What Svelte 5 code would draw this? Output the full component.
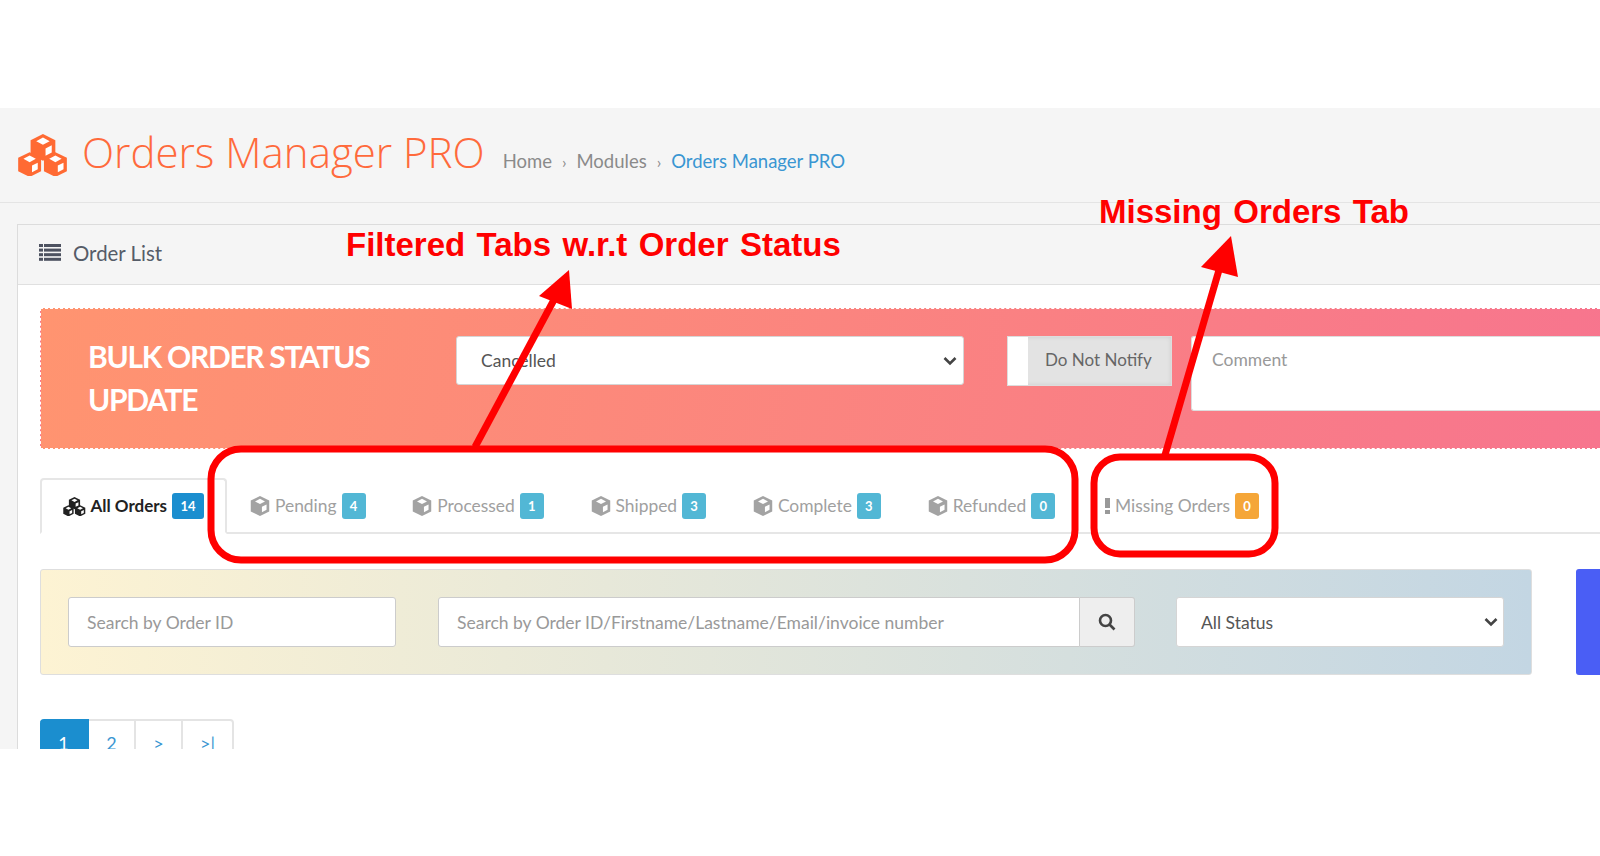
<script>
	const tabs = [
		{ label: "All Orders", count: 14, icon: "cubes", tone: "blue", active: true },
		{ label: "Pending", count: 4, icon: "cube", tone: "info" },
		{ label: "Processed", count: 1, icon: "cube", tone: "info" },
		{ label: "Shipped", count: 3, icon: "cube", tone: "info" },
		{ label: "Complete", count: 3, icon: "cube", tone: "info" },
		{ label: "Refunded", count: 0, icon: "cube", tone: "info" },
		{ label: "Missing Orders", count: 0, icon: "warn", tone: "warning" }
	];
	const pages = ["1", "2", ">", ">|"];
	const cubePts = "12,0 24,6 24,20 12,26 0,20 0,6";
</script>

{#snippet cube(x, y, s, fill)}
	<g transform="translate({x} {y}) scale({s})">
		<polygon points={cubePts} fill={fill} />
		<polygon points="12,3.5 18.5,7 12,10.5 5.5,7" fill="#fff" />
		<polygon points="14.5,14 20.5,11 20.5,18 14.5,21" fill="#fff" />
	</g>
{/snippet}

{#snippet chevron()}
	<svg class="chev" width="14" height="10" viewBox="0 0 14 10">
		<path d="M1.5 2 L7 7.5 L12.5 2" fill="none" stroke="#444" stroke-width="2.6" />
	</svg>
{/snippet}

<div class="page">
	<div class="shell">
		<header class="top">
			<svg class="logo" width="52" height="42" viewBox="0 0 52 44">
				{@render cube(13, 0, 1.08, "#ff6a33")}
				{@render cube(0, 19, 1.0, "#ff6a33")}
				{@render cube(27, 19, 1.0, "#ff6a33")}
			</svg>
			<h1>Orders Manager PRO</h1>
			<nav class="crumbs">
				<span>Home</span><i>›</i><span>Modules</span><i>›</i><a href="#top">Orders Manager PRO</a>
			</nav>
		</header>

		<section class="panel">
			<div class="panel-head">
				<svg width="22" height="17" viewBox="0 0 22 17" fill="#4d5260">
					<rect x="0" y="0" width="4" height="3" /><rect x="5" y="0" width="17" height="3" />
					<rect x="0" y="4.6" width="4" height="3" /><rect x="5" y="4.6" width="17" height="3" />
					<rect x="0" y="9.2" width="4" height="3" /><rect x="5" y="9.2" width="17" height="3" />
					<rect x="0" y="13.8" width="4" height="3" /><rect x="5" y="13.8" width="17" height="3" />
				</svg>
				<span>Order List</span>
			</div>

			<div class="panel-body">
				<div class="banner">
					<h2>BULK ORDER STATUS UPDATE</h2>
					<div class="select status">
						<select><option>Cancelled</option></select>
						{@render chevron()}
					</div>
					<div class="notify"><b></b><span>Do Not Notify</span></div>
					<textarea placeholder="Comment"></textarea>
				</div>

				<div class="tabs">
					{#each tabs as tab}
						<div class="tab" class:active={tab.active} class:missing={tab.icon === "warn"}>
							{#if tab.icon === "cubes"}
								<svg width="23" height="19" viewBox="0 0 52 44">
									{@render cube(13, 0, 1.08, "#222")}
									{@render cube(0, 19, 1.0, "#222")}
									{@render cube(27, 19, 1.0, "#222")}
								</svg>
							{:else if tab.icon === "cube"}
								<svg width="20" height="20" viewBox="0 0 24 26">
									{@render cube(0, 0, 1, "#a3a3a3")}
								</svg>
							{:else}
								<svg class="warn" width="5" height="16" viewBox="0 0 5 16" fill="#999">
									<rect x="0" y="0" width="5" height="10" /><rect x="0" y="12" width="5" height="4" />
								</svg>
							{/if}
							<span class="label">{tab.label}</span>
							<span class="badge {tab.tone}">{tab.count}</span>
						</div>
					{/each}
				</div>

				<div class="filters-row">
					<div class="filters">
						<input class="order-id" placeholder="Search by Order ID" />
						<div class="search">
							<input placeholder="Search by Order ID/Firstname/Lastname/Email/invoice number" />
							<button aria-label="Search">
								<svg width="18" height="18" viewBox="0 0 18 18" fill="none" stroke="#444" stroke-width="2.6">
									<circle cx="7.5" cy="7.5" r="5.5" /><path d="M11.5 11.5 L16.5 16.5" />
								</svg>
							</button>
						</div>
						<div class="select all">
							<select><option>All Status</option></select>
							{@render chevron()}
						</div>
					</div>
					<div class="blue-btn"></div>
				</div>

				<div class="pager">
					{#each pages as p, i}
						<span class:on={i === 0}>{p}</span>
					{/each}
				</div>
			</div>
		</section>
	</div>

	<svg class="notes" width="1600" height="856" viewBox="0 0 1600 856">
		<text x="346" y="256" class="note">Filtered Tabs w.r.t Order Status</text>
		<text x="1099" y="223" class="note">Missing Orders Tab</text>
		<g fill="none" stroke="#f00" stroke-width="7">
			<rect x="211" y="449" width="864" height="111" rx="30" />
			<rect x="1094" y="457" width="181" height="97" rx="26" />
			<path d="M475 447 L556 296" />
			<path d="M1165 455 L1219 270" />
		</g>
		<polygon points="569,270 539,296 572,309" fill="#f00" />
		<polygon points="1231,236 1201,267 1238,277" fill="#f00" />
	</svg>
</div>

<style>
	:global(body) {
		margin: 0;
		background: #fff;
	}

	.page {
		position: relative;
		height: 856px;
		overflow: hidden;
		padding-top: 108px;
		box-sizing: border-box;
		font-family: Lato, "Liberation Sans", sans-serif;
	}

	.shell {
		height: 641px;
		overflow: hidden;
		background: #f5f5f5;
	}

	.top {
		height: 94px;
		border-bottom: 1px solid #e4e4e4;
		display: flex;
		align-items: center;
		padding-left: 17px;
	}

	.logo {
		flex: none;
		margin-top: -1px;
	}

	h1 {
		margin: -8px 0 0 13px;
		font: 300 42px "Open Sans", sans-serif;
		color: #ff6a3c;
		white-space: nowrap;
	}

	.crumbs {
		margin: 12px 0 0 18px;
		font-size: 18.5px;
		color: #8a8a8a;
		display: flex;
		align-items: center;
	}

	.crumbs i {
		font-style: normal;
		margin: 0 10px;
		font-size: 16px;
	}

	.crumbs a {
		color: #3a96d2;
		text-decoration: none;
	}

	.panel {
		margin: 21px 0 0 17px;
		border: 1px solid #dcdcdc;
		border-right: 0;
		border-bottom: 0;
		background: #fff;
	}

	.panel-head {
		height: 60px;
		box-sizing: border-box;
		padding: 0 0 4px 21px;
		background: #f5f5f5;
		border-bottom: 1px solid #e0e0e0;
		display: flex;
		align-items: center;
		gap: 12px;
		font-size: 20.4px;
		color: #555c68;
	}

	.panel-body {
		padding: 23px 0 0 22px;
	}

	.banner {
		height: 141px;
		box-sizing: border-box;
		border: 1px dashed #fff;
		border-right: 0;
		background: linear-gradient(100deg, #ff9470, #f7758e);
		display: flex;
		align-items: flex-start;
		padding: 27px 0 0 47px;
	}

	h2 {
		flex: none;
		width: 368px;
		margin: -1px 0 0;
		font-size: 30px;
		letter-spacing: -1.3px;
		line-height: 43px;
		font-weight: 700;
		color: #fff;
		box-sizing: border-box;
		padding-right: 60px;
	}

	.select {
		position: relative;
		flex: none;
		box-sizing: border-box;
	}

	.select select {
		appearance: none;
		width: 100%;
		height: 100%;
		border: 1px solid #d5d5d5;
		border-radius: 3px;
		background: #fff;
		font: 17.5px Lato, sans-serif;
		color: #555;
		padding: 0 24px;
	}

	.chev {
		position: absolute;
		right: 7px;
		top: 20px;
	}

	.all .chev {
		right: 6px;
	}

	.status {
		width: 508px;
		height: 49px;
	}

	.notify {
		flex: none;
		width: 165px;
		height: 50px;
		box-sizing: border-box;
		margin-left: 43px;
		border: 1px solid #ddd;
		background: #e3e3e3;
		display: flex;
		font-size: 17px;
		line-height: 45px;
		color: #666;
		box-shadow: inset 0 0 4px #ccc;
	}

	.notify b {
		width: 20px;
		background: #fff;
	}

	.notify span {
		margin-left: 17px;
	}

	textarea {
		flex: 1;
		height: 75px;
		box-sizing: border-box;
		margin-left: 19px;
		border: 1px solid #ddd;
		border-right: 0;
		border-radius: 3px 0 0 3px;
		padding: 12px 20px;
		font: 17.5px Lato, sans-serif;
		resize: none;
	}

	::placeholder {
		color: #999;
	}

	.tabs {
		display: flex;
		height: 56px;
		margin-top: 29px;
		box-sizing: border-box;
		border-bottom: 2px solid #e6e6e6;
	}

	.tab {
		display: flex;
		align-items: center;
		gap: 5px;
		padding: 0 23.4px;
		font-size: 17.4px;
		color: #a0a0a0;
		margin-bottom: -2px;
		white-space: nowrap;
	}

	.tab .label {
		margin-top: -2px;
	}

	.tab.missing {
		margin-left: 3px;
	}

	.tab.active {
		border: 2px solid #e6e6e6;
		border-bottom-color: #fff;
		border-radius: 4px 4px 0 0;
		color: #222;
		font-size: 17px;
		font-weight: 700;
		padding: 0 20.5px;
		background: #fff;
	}

	.badge {
		min-width: 24px;
		height: 26px;
		box-sizing: border-box;
		padding: 0 6px;
		border-radius: 3px;
		color: #fff;
		font: 700 13px/26px Lato, sans-serif;
		text-align: center;
	}

	.badge.blue {
		background: #1b8ecf;
		min-width: 32px;
	}
	.badge.info { background: #52b7d5; }
	.badge.warning { background: #f5a638; }

	.filters-row {
		display: flex;
		margin-top: 35px;
		height: 106px;
	}

	.filters {
		flex: none;
		width: 1492px;
		box-sizing: border-box;
		border: 1px solid #dedede;
		border-radius: 3px;
		background: linear-gradient(90deg, #fdf3d3, #c3d6e3);
		display: flex;
		align-items: center;
		padding-left: 27px;
	}

	.filters input {
		box-sizing: border-box;
		height: 50px;
		border: 1px solid #ccc;
		background: #fff;
		font: 17.5px Lato, sans-serif;
		padding: 0 18px;
	}

	.order-id {
		width: 328px;
		border-radius: 3px;
	}

	.search {
		display: flex;
		margin-left: 42px;
	}

	.search input {
		width: 642px;
		border-radius: 3px 0 0 3px;
	}

	.search button {
		width: 55px;
		height: 50px;
		box-sizing: border-box;
		border: 1px solid #ccc;
		border-left: 0;
		border-radius: 0 3px 3px 0;
		background: #eee;
		padding: 0;
		display: flex;
		align-items: center;
		justify-content: center;
	}

	.all {
		width: 328px;
		height: 50px;
		margin-left: 41px;
	}

	.blue-btn {
		flex: 1;
		margin-left: 44px;
		background: #4a5ef5;
		border-radius: 3px 0 0 3px;
	}

	.pager {
		display: flex;
		margin-top: 44px;
	}

	.pager span {
		width: 47px;
		height: 48px;
		box-sizing: border-box;
		border: 2px solid #e4e4e4;
		border-left: 0;
		color: #3a96d2;
		font-size: 18px;
		line-height: 44px;
		text-align: center;
	}

	.pager span:last-child {
		width: 51px;
		border-radius: 0 4px 0 0;
	}

	.pager span.on {
		width: 49px;
		background: #1b8ecf;
		border-color: #1b8ecf;
		color: #fff;
		border-radius: 4px 0 0 0;
	}

	.notes {
		position: absolute;
		left: 0;
		top: 0;
		pointer-events: none;
	}

	.note {
		font: 700 33px "Liberation Sans", Arial, sans-serif;
		word-spacing: 2.2px;
		fill: #f00;
	}
</style>
